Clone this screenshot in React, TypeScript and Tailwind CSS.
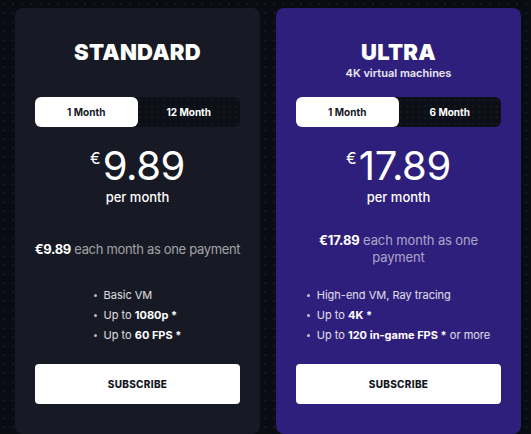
import React from 'react'

interface Plan {
  name: string
  subtitle?: string
  options: [string, string]
  price: string
  features: React.ReactNode[]
  dark: boolean
}

const plans: Plan[] = [
  {
    name: 'STANDARD',
    options: ['1 Month', '12 Month'],
    price: '9.89',
    dark: true,
    features: [
      <>Basic VM</>,
      <>
        Up to <b className="font-bold text-white">1080p *</b>
      </>,
      <>
        Up to <b className="font-bold text-white">60 FPS *</b>
      </>,
    ],
  },
  {
    name: 'ULTRA',
    subtitle: '4K virtual machines',
    options: ['1 Month', '6 Month'],
    price: '17.89',
    dark: false,
    features: [
      <>High-end VM, Ray tracing</>,
      <>
        Up to <b className="font-bold text-white">4K *</b>
      </>,
      <>
        Up to <b className="font-bold text-white">120 in-game FPS *</b> or more
      </>,
    ],
  },
]

function PlanCard({ plan }: { plan: Plan }) {
  return (
    <div
      className={`flex w-[245px] flex-col items-center rounded-lg px-5 pt-[30px] pb-5 text-white ${
        plan.dark ? 'bg-[#171a24]' : 'bg-[#2f1f7c]'
      }`}
    >
      <h2 className="text-[22px] leading-[28px] font-black tracking-[0.01em]">{plan.name}</h2>
      <p className="h-[14px] text-[11px] leading-[14px] font-semibold text-white/90">{plan.subtitle}</p>

      {/* period toggle */}
      <div className="mt-[17px] flex h-[30px] w-full rounded-md bg-[#0d0f17] bg-[radial-gradient(rgba(255,255,255,0.04)_1px,transparent_1px)] bg-[length:6px_6px]">
        <div className="flex flex-1 items-center justify-center rounded-md bg-white text-[10px] font-bold text-[#15171f]">
          {plan.options[0]}
        </div>
        <div className="flex flex-1 items-center justify-center text-[10px] font-bold text-white">
          {plan.options[1]}
        </div>
      </div>

      <div className="mt-[20px] flex items-start leading-none">
        <span className="mt-[3px] mr-[2px] text-[16px] font-normal">€</span>
        <span className="text-[40px] leading-[38px] font-normal tracking-[-0.01em]">{plan.price}</span>
      </div>
      <p className="mt-[4px] text-[13px] leading-[16px] font-medium">per month</p>

      <div className="mt-[20px] flex h-[48px] items-center">
        <p
          className={`text-center text-[13px] leading-[17px] text-white/60 ${
            plan.dark ? 'tracking-[-0.025em] whitespace-nowrap' : 'tracking-[-0.01em]'
          }`}
        >
          <b className="font-bold text-white">€{plan.price}</b> each month as one payment
        </p>
      </div>

      <ul className="mt-[12px] flex flex-col text-[11px] leading-[20px] text-white/85">
        {plan.features.map((f, i) => (
          <li key={i} className="flex items-center">
            <span className="mr-[7px] h-[3px] w-[3px] rounded-full bg-white/70" />
            <span>{f}</span>
          </li>
        ))}
      </ul>

      <button className="mt-[19px] flex h-[40px] w-full items-center justify-center rounded bg-white text-[10px] font-extrabold tracking-[0.03em] text-[#15171f]">
        SUBSCRIBE
      </button>
    </div>
  )
}

export default function App() {
  return (
    <div
      className="flex h-[434px] w-[531px] gap-4 bg-[#0a0c14] bg-[radial-gradient(rgba(255,255,255,0.07)_1px,transparent_1px)] bg-[length:9px_9px] pt-2 pr-[10px] pl-[15px]"
      style={{ fontFamily: 'Inter, "Noto Sans", sans-serif' }}
    >
      {plans.map((p) => (
        <PlanCard key={p.name} plan={p} />
      ))}
    </div>
  )
}
